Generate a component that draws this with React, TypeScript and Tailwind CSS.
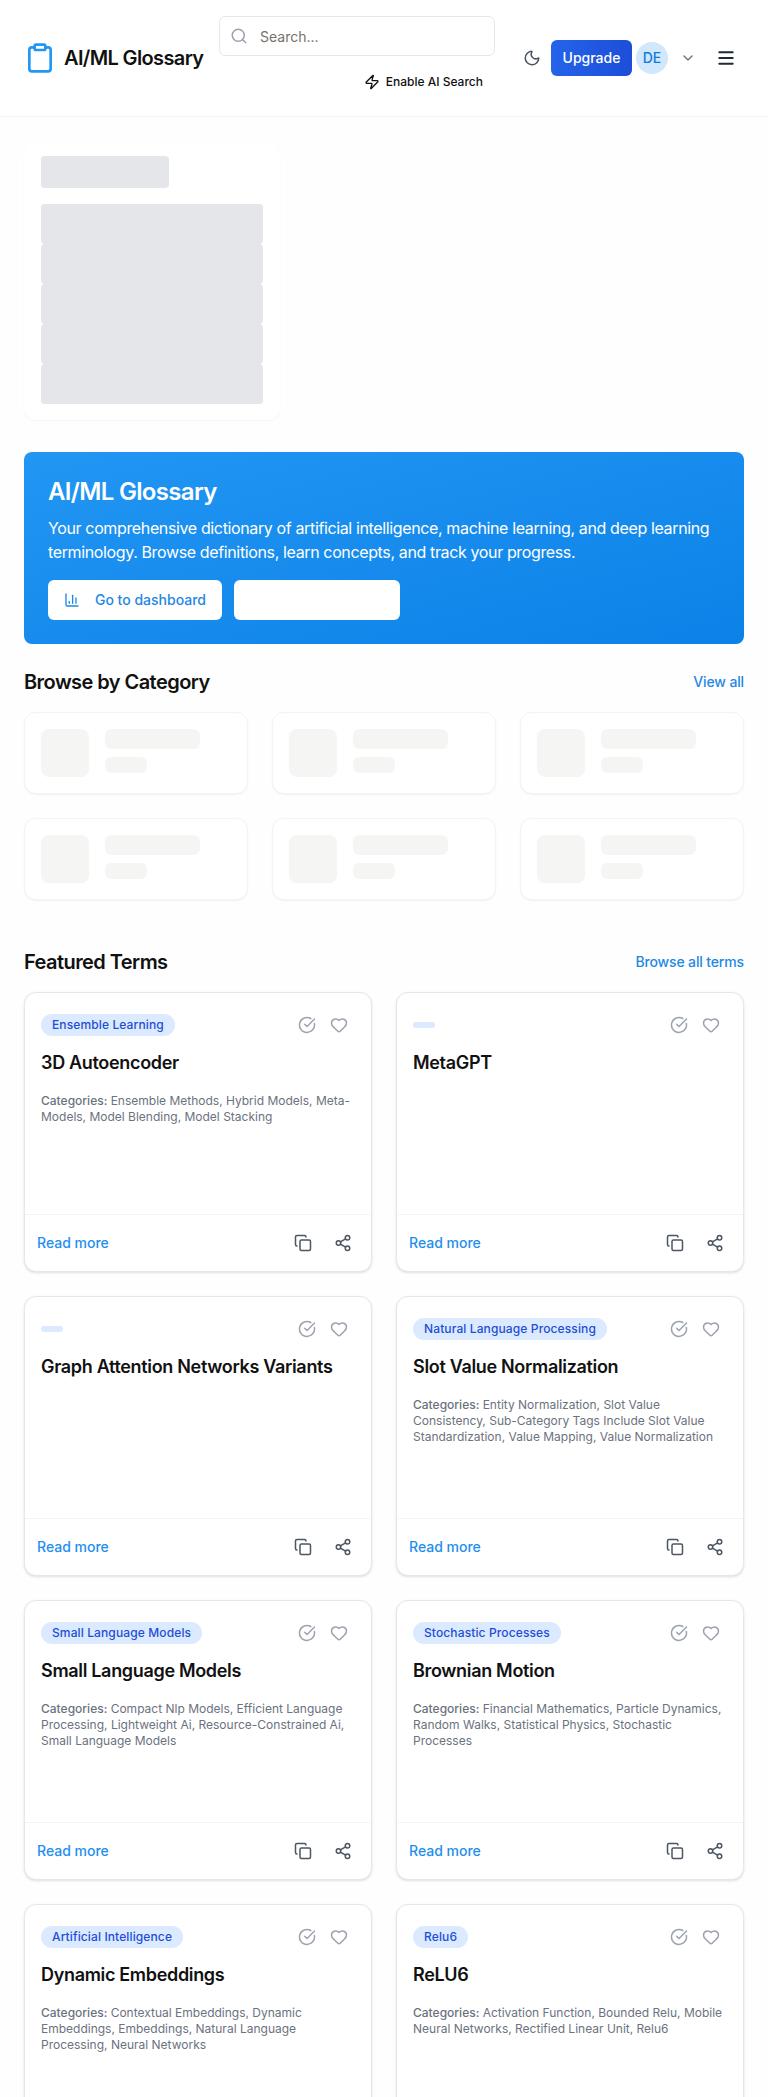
import React from 'react';
import {
  ChartColumn,
  ChevronDown,
  CircleCheckBig,
  Clipboard,
  Copy,
  Heart,
  Menu,
  Moon,
  Search,
  Share2,
  Zap,
} from 'lucide-react';

interface Term {
  badge: string;
  title: string;
  categories: string;
}

const terms: Term[] = [
  { badge: 'Ensemble Learning', title: '3D Autoencoder', categories: 'Ensemble Methods, Hybrid Models, Meta-Models, Model Blending, Model Stacking' },
  { badge: '', title: 'MetaGPT', categories: '' },
  { badge: '', title: 'Graph Attention Networks Variants', categories: '' },
  { badge: 'Natural Language Processing', title: 'Slot Value Normalization', categories: 'Entity Normalization, Slot Value Consistency, Sub-Category Tags Include Slot Value Standardization, Value Mapping, Value Normalization' },
  { badge: 'Small Language Models', title: 'Small Language Models', categories: 'Compact Nlp Models, Efficient Language Processing, Lightweight Ai, Resource-Constrained Ai, Small Language Models' },
  { badge: 'Stochastic Processes', title: 'Brownian Motion', categories: 'Financial Mathematics, Particle Dynamics, Random Walks, Statistical Physics, Stochastic Processes' },
  { badge: 'Artificial Intelligence', title: 'Dynamic Embeddings', categories: 'Contextual Embeddings, Dynamic Embeddings, Embeddings, Natural Language Processing, Neural Networks' },
  { badge: 'Relu6', title: 'ReLU6', categories: 'Activation Function, Bounded Relu, Mobile Neural Networks, Rectified Linear Unit, Relu6' },
];

const Header = () => (
  <header className="flex h-[117px] items-center border-b border-[#f3f4f6] bg-white px-6">
    <div className="flex w-[195px] items-center gap-2">
      <Clipboard size={32} className="text-[#2196f3]" />
      <span className="text-xl font-semibold tracking-[-0.032em] text-[#111111]">AI/ML Glossary</span>
    </div>

    <div className="flex w-[276px] flex-col">
      <div className="relative h-10">
        <Search size={18} className="absolute left-[11px] top-[11px] text-[#9ca3af]" />
        <input
          placeholder="Search..."
          className="h-10 w-full rounded-md border border-[#e5e7eb] bg-white pl-10 pr-3 text-sm placeholder:text-[#78716c]"
        />
      </div>
      <div className="mt-2 flex h-9 items-center justify-end gap-1.5 px-3 text-xs font-medium text-[#111111]">
        <Zap size={16} />
        <span>Enable AI Search</span>
      </div>
    </div>

    <div className="ml-[19px] flex h-9 w-9 items-center justify-center text-[#4b5563]">
      <Moon size={18} />
    </div>
    <div className="ml-px flex h-9 w-[81px] items-center justify-center rounded-md bg-gradient-to-r from-[#2563eb] to-[#1d4ed8] text-sm font-medium text-white">
      Upgrade
    </div>
    <div className="ml-1 flex h-8 w-8 items-center justify-center rounded-full bg-[#d0e7fc] text-sm font-medium text-[#0f7bd8]">
      DE
    </div>
    <ChevronDown size={16} className="ml-3 text-[#6b7280]" />
    <Menu size={20} strokeWidth={2.4} className="ml-5 text-[#1f2937]" />
  </header>
);

const LoadingPanel = () => (
  <div className="mt-[26px] w-64 rounded-xl border border-transparent bg-white px-4 pb-[15px] pt-3 shadow-[0_1px_2px_rgba(0,0,0,0.04)]">
    <div className="mb-4 h-8 w-32 rounded bg-[#e5e6ea]" />
    {[0, 1, 2, 3, 4].map((i) => (
      <div key={i} className="h-10 rounded bg-[#e5e6ea]" />
    ))}
  </div>
);

const Hero = () => (
  <section className="mt-8 rounded-lg bg-gradient-to-br from-[#2196f3] to-[#0b82e8] p-6 text-white">
    <h1 className="mb-2 text-2xl font-semibold tracking-[-0.028em]">AI/ML Glossary</h1>
    <p className="mb-4 text-base tracking-[-0.023em]">
      Your comprehensive dictionary of artificial intelligence, machine learning, and deep learning terminology. Browse definitions, learn concepts, and track your progress.
    </p>
    <div className="flex gap-3">
      <div className="flex h-10 w-[174px] items-center gap-[15px] whitespace-nowrap rounded-md bg-white px-4 text-sm font-medium text-[#1e88e5]">
        <ChartColumn size={18} />
        <span>Go to dashboard</span>
      </div>
      <div className="h-10 w-[166px] rounded-md bg-white" />
    </div>
  </section>
);

const SectionTitle = ({ title, link }: { title: string; link: string }) => (
  <div className="mb-4 flex items-center justify-between">
    <h2 className="text-xl font-semibold tracking-[-0.028em] text-[#111111]">{title}</h2>
    <span className="text-sm font-medium tracking-[-0.01em] text-[#1e88e5]">{link}</span>
  </div>
);

const CategorySkeleton = () => (
  <div className="flex h-[82px] gap-4 rounded-xl border border-[#f3f4f6] bg-white p-4 shadow-xs">
    <div className="h-12 w-12 rounded-lg bg-[#f5f5f4]" />
    <div>
      <div className="h-5 w-[95px] rounded-md bg-[#f5f5f4]" />
      <div className="mt-2 h-4 w-[42px] rounded-md bg-[#f5f5f4]" />
    </div>
  </div>
);

const TermCard = ({ term }: { term: Term }) => (
  <article className="flex h-[280px] flex-col rounded-xl border border-[#e5e7eb] bg-white shadow-sm">
    <div className="flex-1 p-4">
      <div className="flex h-8 items-center justify-between">
        <span className="rounded-full bg-[#dbeafe] px-[11px] py-[3px] text-xs font-medium tracking-[0.01em] text-[#1d4ed8]">
          {term.badge}
        </span>
        <div className="flex text-[#9ca3af]">
          <div className="flex h-8 w-8 items-center justify-center">
            <CircleCheckBig size={18} />
          </div>
          <div className="flex h-8 w-8 items-center justify-center">
            <Heart size={18} />
          </div>
        </div>
      </div>
      <h3 className="mb-4 mt-2 text-lg font-semibold tracking-[-0.018em] text-[#111111]">{term.title}</h3>
      {term.categories && (
        <p className="text-xs text-[#6b7280]">
          <span className="font-medium">Categories:</span> {term.categories}
        </p>
      )}
    </div>
    <div className="flex h-[57px] items-center justify-between border-t border-[#f3f4f6] pl-3 pr-[11px]">
      <span className="text-sm font-medium text-[#1e8ef0]">Read more</span>
      <div className="flex gap-1.5 text-[#4b5563]">
        <div className="flex h-[34px] w-[34px] items-center justify-center">
          <Copy size={18} />
        </div>
        <div className="flex h-[34px] w-[34px] items-center justify-center">
          <Share2 size={18} />
        </div>
      </div>
    </div>
  </article>
);

export default function App() {
  return (
    <div className="h-[2097px] overflow-hidden bg-[#fefefe] font-[Inter,sans-serif]">
      <Header />
      <main className="px-6">
        <LoadingPanel />
        <Hero />

        <div className="mt-6">
          <SectionTitle title="Browse by Category" link="View all" />
          <div className="grid grid-cols-3 gap-6">
            {[0, 1, 2, 3, 4, 5].map((i) => (
              <CategorySkeleton key={i} />
            ))}
          </div>
        </div>

        <div className="mt-12">
          <SectionTitle title="Featured Terms" link="Browse all terms" />
          <div className="grid grid-cols-2 gap-6">
            {terms.map((term) => (
              <TermCard key={term.title} term={term} />
            ))}
          </div>
        </div>
      </main>
    </div>
  );
}
